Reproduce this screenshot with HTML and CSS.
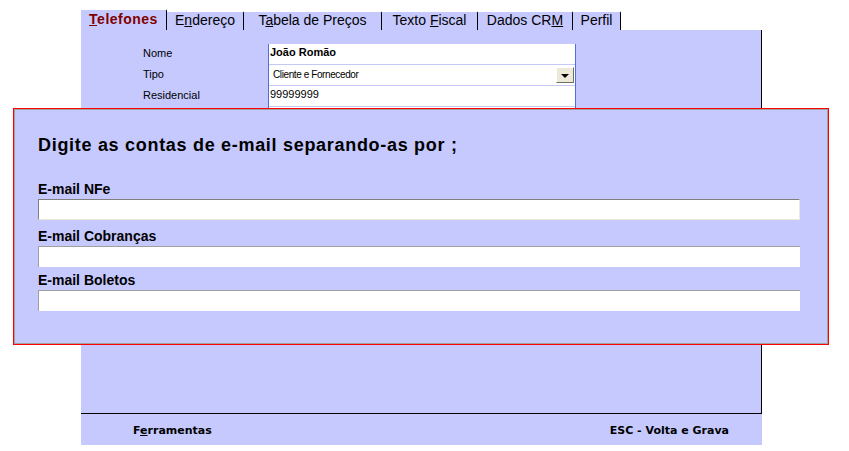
FILE: index.html
```html
<!DOCTYPE html>
<html>
	<head>
		<meta charset="UTF-8">
		<title>Cadastro de Clientes</title>
		<link rel="stylesheet" href="styles.css">
	</head>
	<body>
		<div class="app">
			<ul class="tabs">
				<li class="tab tab-telefones active"><u>T</u>elefones</li>
				<li class="tab tab-endereco">E<u>n</u>dereço</li>
				<li class="tab tab-precos">T<u>a</u>bela de Preços</li>
				<li class="tab tab-fiscal">Texto <u>F</u>iscal</li>
				<li class="tab tab-crm">Dados CR<u>M</u></li>
				<li class="tab tab-perfil">Perfil</li>
			</ul>
			<div class="panel">
				<div class="form">
					<ul class="labels">
						<li>Nome</li>
						<li>Tipo</li>
						<li>Residencial</li>
						<li></li>
					</ul>
					<ul class="values">
						<li class="strong">João Romão</li>
						<li class="combo"><span>Cliente e Fornecedor</span><i class="drop"></i></li>
						<li>99999999</li>
						<li></li>
						<li></li>
						<li></li>
						<li></li>
						<li></li>
						<li></li>
						<li></li>
					</ul>
				</div>
			</div>
			<div class="footer">
				<span>F<u>e</u>rramentas</span>
				<span>ESC - Volta e Grava</span>
			</div>
		</div>

		<!-- janela de e-mails, sobre o cadastro -->
		<div class="dialog">
			<h1>Digite as contas de e-mail separando-as por ;</h1>
			<div class="field first">
				<label>E-mail NFe</label>
				<input type="text" class="focus">
			</div>
			<div class="field">
				<label>E-mail Cobranças</label>
				<input type="text">
			</div>
			<div class="field">
				<label>E-mail Boletos</label>
				<input type="text">
			</div>
		</div>
	</body>
</html>
```
FILE: styles.css
```css
body,ul,li,h1{margin:0; padding:0;}
ul{list-style-type:none;}
body{background:#fff;color:#000;font:11px "Liberation Sans",Arial,sans-serif;}

.app{width:681px;margin-left:81px;}

/* abas */
.tabs{display:flex;align-items:flex-end;height:30px;}
.tab{box-sizing:border-box;height:19px;line-height:17px;font-size:14px;text-align:center;background:#c6c9fe;border-top:1px solid #fff;border-right:1px solid #000;border-top-right-radius:2px;white-space:nowrap;}
.tab u{text-decoration:underline;}
.tab.active{height:21px;padding-top:1px;font-weight:bold;color:#800000;letter-spacing:0.5px;}
.tab-telefones{width:86px;}
.tab-endereco{width:77px;}
.tab-precos{width:138px;}
.tab-fiscal{width:96px;}
.tab-crm{width:95px;}
.tab-perfil{width:48px;}

.panel{box-sizing:border-box;height:384px;background:#c6c9fe;border-right:1px solid #000;border-bottom:1px solid #000;padding:14px 0 0 62px;}
.form{display:flex;}
.labels{width:125px;}
.labels li{height:21px;line-height:18px;}
.values{box-sizing:border-box;width:308px;border-left:1px solid #4f6fd6;border-right:1px solid #4f6fd6;}
.values li{height:20px;line-height:16px;background:#fff;border-bottom:1px solid #c4c8f2;padding-left:1px;}
.values .strong{font-weight:bold;}
.values .combo{display:flex;align-items:center;justify-content:space-between;font-size:10px;letter-spacing:-0.4px;padding:0 1px 0 4px;}
.drop{box-sizing:border-box;width:18px;height:16px;background:#ece9d8;border:1px solid;border-color:#fff #716f64 #716f64 #fff;display:flex;align-items:center;justify-content:center;}
.drop:after{content:"";border-left:4px solid transparent;border-right:4px solid transparent;border-top:4px solid #000;margin-top:1px;}

.footer{height:31px;background:#c6c9fe;display:flex;justify-content:space-between;padding:3px 33px 0 52px;box-sizing:border-box;font:bold 11px/28px "DejaVu Sans",Verdana,sans-serif;}
.footer u{text-decoration:underline;}

/* janela sobreposta */
.dialog{position:absolute;left:13px;top:108px;width:816px;height:237px;box-sizing:border-box;background:#c6c9fe;border:1px solid #f00;box-shadow:inset 0 0 0 1px #a0a0a0;padding:25px 0 0 24px;font-family:"Liberation Sans",Arial,sans-serif;}
.dialog h1{font-size:18px;line-height:22px;font-weight:bold;letter-spacing:0.7px;margin-bottom:25px;}
.field{margin-bottom:5px;}
.field.first{margin-bottom:8px;}
.field label{display:block;font-size:14px;line-height:16px;font-weight:bold;margin-bottom:2px;}
.field input{display:block;box-sizing:border-box;width:762px;height:21px;margin:0;padding:0 2px;background:#fff;border:0;border-top:1px solid #a0a0a0;border-left:1px solid #a0a0a0;outline:none;}
.field input.focus{border-top-color:#808080;border-left-color:#808080;border-right:1px solid #ece9d8;border-bottom:1px solid #ece9d8;}
```
